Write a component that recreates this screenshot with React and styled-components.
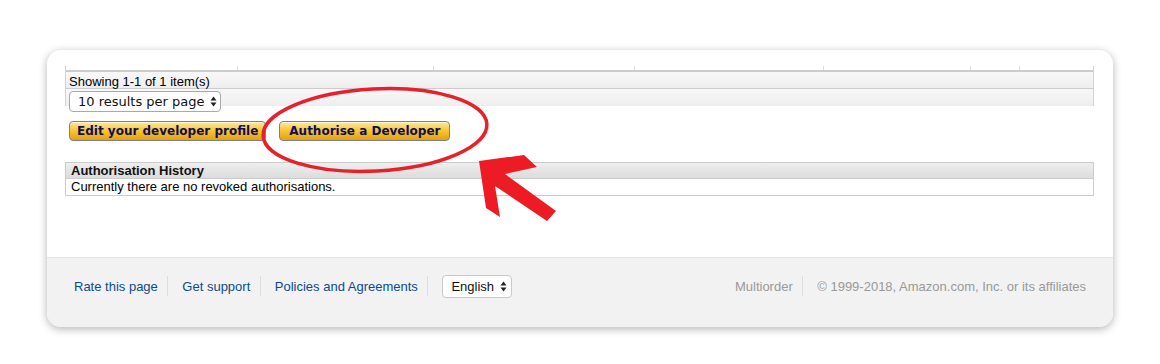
import React from "react";
import styled, { createGlobalStyle } from "styled-components";

const GlobalStyle = createGlobalStyle`
  html, body { margin: 0; padding: 0; background: #ffffff; }
  body { font-family: "Liberation Sans", Arial, sans-serif; }
`;

const Page = styled.div`
  position: relative;
  width: 1160px;
  height: 364px;
  padding: 50px 47px 0 47px;
  box-sizing: border-box;
`;

const Card = styled.div`
  width: 1066px;
  height: 277px;
  border-radius: 14px;
  background: #ffffff;
  box-shadow: 0 2px 8px rgba(0, 0, 0, 0.3);
  overflow: hidden;
  display: flex;
  flex-direction: column;
`;

const Content = styled.div`
  flex: 1;
  padding: 16px 19px 0 18px;
  font-family: "Liberation Sans", Arial, sans-serif;
  font-size: 13px;
  color: #000;
`;

const ResultsTable = styled.div`
  border-left: 1px solid #d4d4d4;
  border-right: 1px solid #d4d4d4;
`;

const ColumnStrip = styled.div`
  display: grid;
  grid-template-columns: 172px 196px 201px 189px 147px 49px 1fr;
  height: 4px;
  border-bottom: 2px solid #cccccc;
`;

const StripCell = styled.div`
  border-right: ${(p) => (p.$last ? "none" : "1px solid #dcdcdc")};
`;

const InfoRow = styled.div`
  height: 17px;
  box-sizing: border-box;
  padding: 2px 0 0 3px;
  line-height: 16px;
  background: linear-gradient(#f8f8f8, #eeeeee);
  border-bottom: 1px solid #cccccc;
  white-space: nowrap;
`;

const PagerRow = styled.div`
  height: 17px;
  box-sizing: border-box;
  padding: 2px 0 0 3px;
  background: linear-gradient(#f8f8f8, #eeeeee);
`;

const PagerSelect = styled.div`
  width: 152px;
  height: 21px;
  box-sizing: border-box;
  border: 1px solid #a9a9a9;
  border-radius: 4px;
  background: #ffffff;
  display: flex;
  align-items: center;
  justify-content: space-between;
  padding: 0 3px 0 8px;
  font-family: "DejaVu Sans", Verdana, sans-serif;
  font-size: 13px;
  color: #111;
  white-space: nowrap;
`;

const ButtonRow = styled.div`
  display: flex;
  gap: 13px;
  margin-top: 15px;
  padding-left: 4px;
`;

const YellowButton = styled.div`
  height: 20px;
  box-sizing: border-box;
  padding: 0 ${(p) => p.$pad || 8}px;
  border: 1px solid #7f7f8c;
  border-radius: 4px;
  background: linear-gradient(#fde9a0 0%, #f8cf4e 35%, #f2b51d 70%, #e3a114 100%);
  box-shadow: inset 0 1px 0 rgba(255, 255, 255, 0.6);
  display: flex;
  align-items: center;
  font-family: "DejaVu Sans", Verdana, sans-serif;
  font-weight: bold;
  font-size: 12px;
  color: #0d0d5e;
  white-space: nowrap;
`;

const HistoryTable = styled.div`
  margin-top: 21px;
  border: 1px solid #cccccc;
`;

const HistoryHead = styled.div`
  height: 15px;
  line-height: 15px;
  padding-left: 5px;
  background: linear-gradient(#eeeeee, #dcdcdc);
  border-bottom: 1px solid #cccccc;
  font-weight: bold;
  color: #111;
`;

const HistoryBody = styled.div`
  height: 16px;
  line-height: 16px;
  padding-left: 5px;
`;

const Footer = styled.div`
  height: 70px;
  box-sizing: border-box;
  background: #f2f2f2;
  border-top: 1px solid #e4e4e4;
  display: flex;
  align-items: center;
  justify-content: space-between;
  padding: 0 27px 13px 27px;
  font-family: "Liberation Sans", Arial, sans-serif;
  font-size: 13px;
`;

const FooterGroup = styled.div`
  display: flex;
  align-items: center;
`;

const FooterItem = styled.span`
  display: flex;
  align-items: center;
  color: ${(p) => (p.$muted ? "#999999" : "#0d4a8e")};
  padding-right: ${(p) => (p.$last ? 0 : 9.5)}px;
  margin-right: ${(p) => (p.$last ? 0 : 14)}px;
  border-right: ${(p) => (p.$last ? "none" : "1px solid #dddddd")};
  height: 20px;
  white-space: nowrap;
`;

const LangSelect = styled.div`
  width: 70px;
  height: 23px;
  box-sizing: border-box;
  border: 1px solid #c8c8c8;
  border-radius: 4px;
  background: #ffffff;
  display: flex;
  align-items: center;
  justify-content: space-between;
  padding: 0 4px 0 8px;
  color: #111;
  font-size: 13px;
`;

const Overlay = styled.svg`
  position: absolute;
  left: 0;
  top: 0;
  z-index: 2;
  pointer-events: none;
`;

const UpDown = () => (
  <svg width="7" height="11" viewBox="0 0 7 11">
    <path d="M3.5 0.5 L6.5 4.5 L0.5 4.5 Z" fill="#222" />
    <path d="M3.5 10.5 L6.5 6.5 L0.5 6.5 Z" fill="#222" />
  </svg>
);

export default function App() {
  return (
    <>
      <GlobalStyle />
      <Page>
        <Card>
          <Content>
            <ResultsTable>
              <ColumnStrip>
                {[0, 1, 2, 3, 4, 5, 6].map((i) => (
                  <StripCell key={i} $last={i === 6} />
                ))}
              </ColumnStrip>
              <InfoRow>Showing 1-1 of 1 item(s)</InfoRow>
              <PagerRow>
                <PagerSelect>
                  <span>10 results per page</span>
                  <UpDown />
                </PagerSelect>
              </PagerRow>
            </ResultsTable>
            <ButtonRow>
              <YellowButton $pad={7}>Edit your developer profile</YellowButton>
              <YellowButton $pad={9}>Authorise a Developer</YellowButton>
            </ButtonRow>
            <HistoryTable>
              <HistoryHead>Authorisation History</HistoryHead>
              <HistoryBody>Currently there are no revoked authorisations.</HistoryBody>
            </HistoryTable>
          </Content>
          <Footer>
            <FooterGroup>
              <FooterItem>Rate this page</FooterItem>
              <FooterItem>Get support</FooterItem>
              <FooterItem>Policies and Agreements</FooterItem>
              <LangSelect>
                <span>English</span>
                <UpDown />
              </LangSelect>
            </FooterGroup>
            <FooterGroup>
              <FooterItem $muted>Multiorder</FooterItem>
              <FooterItem $muted $last>
                © 1999-2018, Amazon.com, Inc. or its affiliates
              </FooterItem>
            </FooterGroup>
          </Footer>
        </Card>
        <Overlay width="1160" height="364" viewBox="0 0 1160 364">
          <ellipse
            cx="375"
            cy="130"
            rx="112"
            ry="41"
            transform="rotate(-3 375 130)"
            fill="none"
            stroke="#e8202a"
            strokeWidth="3.5"
          />
          <polygon
            points="479,161 524,155 537,167 505,174 556,211 547,221 495,186 500,217 486,208"
            fill="#ed1c24"
          />
        </Overlay>
      </Page>
    </>
  );
}
